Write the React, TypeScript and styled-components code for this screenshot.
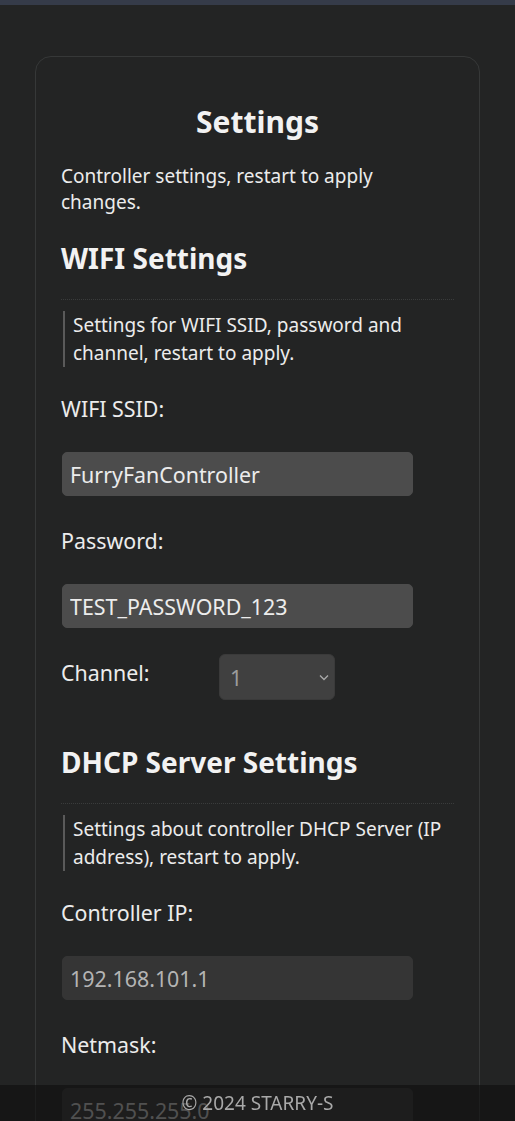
import React from "react";
import styled, { createGlobalStyle } from "styled-components";

const GlobalStyle = createGlobalStyle`
  html, body {
    margin: 0;
    padding: 0;
    background: #232424;
    color: #ececec;
    font-family: "Noto Sans", "Open Sans", sans-serif;
  }
  * { box-sizing: border-box; }
`;

const TopBar = styled.div`
  height: 5px;
  background: #353b49;
`;

const Page = styled.main`
  padding: 51px 35px 80px;
`;

const Card = styled.section`
  border: 1px solid #363838;
  border-radius: 16px;
  padding: 45px 25px 40px;
`;

const Title = styled.h1`
  margin: 0 0 21px;
  text-align: center;
  font-size: 30px;
  line-height: 40px;
  font-weight: 700;
  color: #f2f2f2;
`;

const Lead = styled.p`
  margin: 0 0 25px;
  font-size: 19px;
  line-height: 26px;
`;

const SectionTitle = styled.h2`
  margin: 0;
  font-size: 28px;
  line-height: 36px;
  font-weight: 700;
  color: #f2f2f2;
`;

const Rule = styled.hr`
  margin: 23px 0 11px;
  border: none;
  border-top: 1px dotted #3a3c3c;
  height: 0;
`;

const Quote = styled.blockquote`
  margin: 0 0 23px 2px;
  padding: 0 0 0 8px;
  border-left: 2px solid #5a5a5a;
  font-size: 19px;
  line-height: 28px;
`;

const Field = styled.div`
  display: flex;
  flex-direction: column;
  align-items: flex-start;
  gap: 29px;
  margin-bottom: 26px;
`;

const Label = styled.label`
  padding-top: 4px;
  font-size: 21.4px;
  line-height: 29px;
`;

const TextInput = styled.input<{ $dim?: boolean }>`
  width: 351px;
  height: 44px;
  margin-left: 1px;
  padding: 0 7px;
  border: 1px solid ${(p) => (p.$dim ? "#353535" : "#4c4c4c")};
  border-radius: 5px;
  background: ${(p) => (p.$dim ? "#353535" : "#4c4c4c")};
  color: ${(p) => (p.$dim ? "#b4b4b4" : "#ececec")};
  font-family: "Noto Sans", "Open Sans", sans-serif;
  font-size: 21.4px;
  outline: none;
`;

const InlineField = styled.div`
  display: grid;
  grid-template-columns: 158px 116px;
  align-items: start;
  margin-bottom: 44px;
`;

const SelectWrap = styled.div`
  position: relative;
  width: 116px;
  height: 46px;
`;

const Select = styled.select`
  appearance: none;
  width: 100%;
  height: 100%;
  padding: 0 10px;
  border: 1px solid #3a3a3a;
  border-radius: 6px;
  background: #404040;
  color: #9c9c9c;
  font-family: "Noto Sans", "Open Sans", sans-serif;
  font-size: 21.4px;
  outline: none;
`;

const Chevron = styled.svg`
  position: absolute;
  right: 6px;
  top: 20px;
  pointer-events: none;
`;

const Footer = styled.footer`
  position: fixed;
  left: 0;
  right: 0;
  bottom: 0;
  height: 36px;
  display: flex;
  align-items: center;
  justify-content: center;
  background: rgba(14, 14, 14, 0.6);
  color: #a9a9a9;
  font-size: 19px;
`;

export default function App() {
  return (
    <>
      <GlobalStyle />
      <TopBar />
      <Page>
        <Card>
          <Title>Settings</Title>
          <Lead>Controller settings, restart to apply changes.</Lead>

          <SectionTitle>WIFI Settings</SectionTitle>
          <Rule />
          <Quote>Settings for WIFI SSID, password and channel, restart to apply.</Quote>
          <Field>
            <Label>WIFI SSID:</Label>
            <TextInput defaultValue="FurryFanController" />
          </Field>
          <Field>
            <Label>Password:</Label>
            <TextInput defaultValue="TEST_PASSWORD_123" />
          </Field>
          <InlineField>
            <Label>Channel:</Label>
            <SelectWrap>
              <Select defaultValue="1">
                {Array.from({ length: 13 }, (_, i) => (
                  <option key={i + 1} value={String(i + 1)}>
                    {i + 1}
                  </option>
                ))}
              </Select>
              <Chevron width="10" height="7" viewBox="0 0 10 7" fill="none">
                <path d="M1 1.5 L5 5.5 L9 1.5" stroke="#aaaaaa" strokeWidth="1.3" />
              </Chevron>
            </SelectWrap>
          </InlineField>

          <SectionTitle>DHCP Server Settings</SectionTitle>
          <Rule />
          <Quote>Settings about controller DHCP Server (IP address), restart to apply.</Quote>
          <Field>
            <Label>Controller IP:</Label>
            <TextInput $dim defaultValue="192.168.101.1" />
          </Field>
          <Field>
            <Label>Netmask:</Label>
            <TextInput $dim defaultValue="255.255.255.0" />
          </Field>
        </Card>
      </Page>
      <Footer>© 2024 STARRY-S</Footer>
    </>
  );
}
